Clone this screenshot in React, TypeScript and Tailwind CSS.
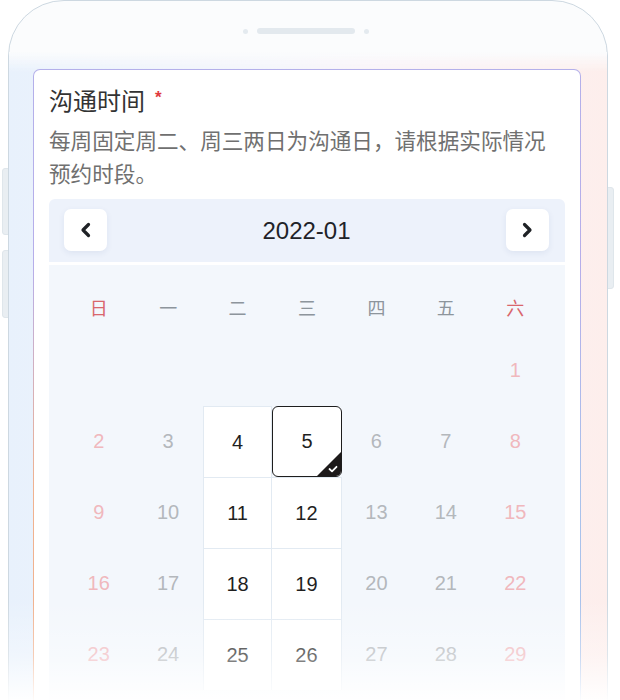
import React from "react";

const rows: (number | null)[][] = [
  [null, null, null, null, null, null, 1],
  [2, 3, 4, 5, 6, 7, 8],
  [9, 10, 11, 12, 13, 14, 15],
  [16, 17, 18, 19, 20, 21, 22],
  [23, 24, 25, 26, 27, 28, 29],
];

const active = new Set([4, 5, 11, 12, 18, 19, 25, 26]);
const weekdays = ["日", "一", "二", "三", "四", "五", "六"];

function Chevron({ dir }: { dir: "left" | "right" }) {
  return (
    <svg width="14" height="16" viewBox="0 0 14 16" fill="none">
      {dir === "left" ? (
        <path d="M9.5 2.5 L4 8 L9.5 13.5" stroke="#1f2226" strokeWidth="3.2" strokeLinecap="round" strokeLinejoin="round" />
      ) : (
        <path d="M4.5 2.5 L10 8 L4.5 13.5" stroke="#1f2226" strokeWidth="3.2" strokeLinecap="round" strokeLinejoin="round" />
      )}
    </svg>
  );
}

function DayCell({ day, col }: { day: number | null; col: number }) {
  if (day === null) return <div />;
  const isActive = active.has(day);
  if (day === 5) {
    return (
      <div className="relative flex items-center justify-center bg-white border-[1.5px] border-[#1e1e1e] rounded-[6px] overflow-hidden text-[20px] text-[#1f1f1f]">
        {day}
        <svg className="absolute right-0 bottom-0" width="24" height="24" viewBox="0 0 24 24">
          <polygon points="24,0 24,24 0,24" fill="#1d1a1a" />
          <path d="M12.5 17 L15 19.3 L19.5 14.8" stroke="#ffffff" strokeWidth="1.8" fill="none" strokeLinecap="round" strokeLinejoin="round" />
        </svg>
      </div>
    );
  }
  if (isActive) {
    const borders = col === 2 ? "border-l border-t border-r" : "border-t border-r";
    return (
      <div className={`flex items-center justify-center bg-white ${borders} border-[#e2eaf2] text-[20px] text-[#1f1f1f]`}>
        {day}
      </div>
    );
  }
  const weekend = col === 0 || col === 6;
  return (
    <div className={`flex items-center justify-center text-[20px] ${weekend ? "text-[#f0b8bd]" : "text-[#b4b8bc]"}`}>
      {day}
    </div>
  );
}

export default function App() {
  return (
    <div
      className="relative w-[620px] h-[700px] overflow-hidden bg-white"
      style={{ fontFamily: '"Liberation Sans", "Noto Sans CJK SC", sans-serif' }}
    >
      {/* side buttons */}
      <div className="absolute left-[2px] top-[168px] w-[7px] h-[67px] rounded-l-[3px] bg-[#e9eef2] border border-[#dfe6eb]" />
      <div className="absolute left-[2px] top-[250px] w-[7px] h-[68px] rounded-l-[3px] bg-[#e9eef2] border border-[#dfe6eb]" />
      <div className="absolute left-[607px] top-[187px] w-[7px] h-[102px] rounded-r-[3px] bg-[#e9eef2] border border-[#dfe6eb]" />

      <div className="relative ml-[8px] w-[600px] h-[780px] rounded-t-[56px] border-[1.5px] border-[#cdd8e1] bg-[#fbfcfd] flex flex-col">
        {/* top bezel */}
        <div className="h-[50.5px] flex items-start justify-center gap-[9px] pt-[27px] pr-[4px]">
          <div className="w-[5px] h-[5px] rounded-full bg-[#e4eaef] mt-[0.5px]" />
          <div className="w-[98px] h-[6px] rounded-full bg-[#e3e9ee]" />
          <div className="w-[5px] h-[5px] rounded-full bg-[#e4eaef] mt-[0.5px]" />
        </div>

        {/* screen */}
        <div className="flex-1 pl-[24px] pr-[26px] pt-[17px] bg-[linear-gradient(to_bottom,#fbfcfd,rgba(251,252,253,0)_20px),linear-gradient(to_right,#e8f1fc,#f3f4fb_45%,#f9f2f8_60%,#fdeeec)]">
          <div className="rounded-[7px] p-px h-[700px] bg-[linear-gradient(to_bottom,#b4b0ea_0%,#b6aeea_28%,rgba(182,174,234,0)_60%),linear-gradient(to_right,#f1b28f,#ddc6e0_50%,#a9c2ec)]">
            <div className="h-full bg-white rounded-[6px] px-[15px] pt-[16px]">
              <div className="flex items-start text-[24px] leading-[32px] text-[#333333]">
                <span>沟通时间</span>
                <span className="ml-[10px] text-[17px] leading-[24px] font-bold text-[#e0393e]">*</span>
              </div>
              <div className="mt-[7px] text-[21.6px] leading-[33px] text-[#707070] whitespace-nowrap">
                每周固定周二、周三两日为沟通日，请根据实际情况
                <br />
                预约时段。
              </div>

              {/* calendar */}
              <div className="mt-[8px] rounded-[6px] overflow-hidden">
                <div className="h-[63px] bg-[#edf2fb] flex items-center justify-between pl-[15px] pr-[16px]">
                  <div className="w-[43px] h-[42px] rounded-[7px] bg-white shadow-[0_2px_6px_rgba(40,70,130,0.08)] flex items-center justify-center">
                    <Chevron dir="left" />
                  </div>
                  <div className="text-[24px] text-[#1f2328] pt-[2px]">2022-01</div>
                  <div className="w-[43px] h-[42px] rounded-[7px] bg-white shadow-[0_2px_6px_rgba(40,70,130,0.08)] flex items-center justify-center">
                    <Chevron dir="right" />
                  </div>
                </div>
                <div className="mt-[3px] bg-[#f3f7fc] pt-[19px] px-[15px] pb-[40px]">
                  <div className="grid grid-cols-7 h-[51px] items-center text-center text-[18px]">
                    {weekdays.map((w, i) => (
                      <div key={w} className={i === 0 || i === 6 ? "text-[#d9666d]" : "text-[#8d959c]"}>
                        {w}
                      </div>
                    ))}
                  </div>
                  {rows.map((r, ri) => (
                    <div key={ri} className="grid grid-cols-7 h-[71px]">
                      {r.map((d, ci) => (
                        <DayCell key={ci} day={d} col={ci} />
                      ))}
                    </div>
                  ))}
                </div>
              </div>
            </div>
          </div>
        </div>
      </div>

      {/* bottom fade */}
      <div className="absolute left-0 right-0 bottom-0 h-[100px] bg-[linear-gradient(to_bottom,rgba(255,255,255,0),rgba(255,255,255,0.35)_55%,rgba(255,255,255,0.95))]" />
    </div>
  );
}
